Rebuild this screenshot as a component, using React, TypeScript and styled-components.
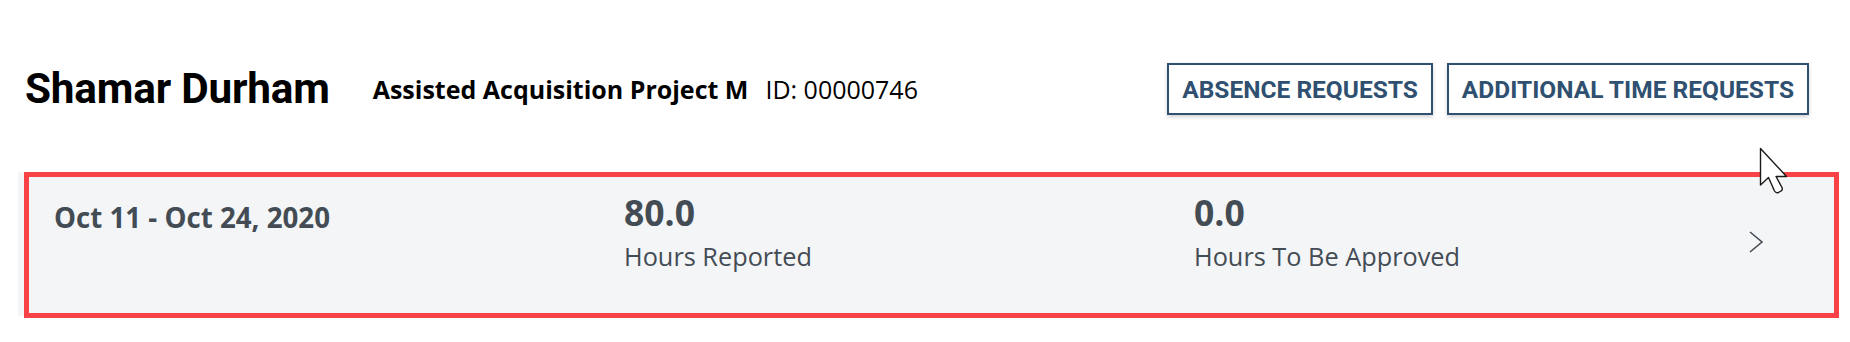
import * as React from "react";
import styled, { createGlobalStyle } from "styled-components";

const ink = "#434c54";
const navy = "#2f5070";

const GlobalStyle = createGlobalStyle`
  html, body {
    margin: 0;
    padding: 0;
    background: #ffffff;
  }
  body {
    font-family: "Open Sans", "Liberation Sans", sans-serif;
  }
`;

const Page = styled.div`
  position: relative;
  width: 1850px;
  height: 342px;
  overflow: hidden;
  background: #ffffff;
`;

const Header = styled.header`
  display: flex;
  align-items: center;
  height: 52px;
  padding: 63px 41px 0 25px;
`;

const Name = styled.h1`
  margin: 0;
  font-family: Roboto, "Liberation Sans", sans-serif;
  font-weight: 700;
  font-size: 42.3px;
  line-height: 52px;
  color: #000000;
  letter-spacing: -0.2px;
`;

const Project = styled.span`
  margin-left: 43px;
  font-family: "Open Sans", "Liberation Sans", sans-serif;
  font-weight: 700;
  font-size: 25px;
  color: #000000;
`;

const EmployeeId = styled.span`
  margin-left: 17px;
  font-family: "Open Sans", "Liberation Sans", sans-serif;
  font-weight: 400;
  font-size: 25px;
  color: #000000;
`;

const Actions = styled.div`
  display: flex;
  gap: 14px;
  margin-left: auto;
`;

const OutlineButton = styled.button`
  height: 52px;
  padding: 0 13px;
  border: 2px solid ${navy};
  background: #ffffff;
  color: ${navy};
  font-family: Roboto, "Liberation Sans", sans-serif;
  font-weight: 700;
  font-size: 24.5px;
  text-transform: uppercase;
  box-shadow: 0 2px 4px rgba(0, 0, 0, 0.18);
  cursor: pointer;
`;

const Card = styled.section`
  position: relative;
  display: grid;
  grid-template-columns: 570px 570px 1fr auto;
  align-items: start;
  margin: 57px 16px 0 18px;
  padding: 18px 70px 43px 36px;
  background: #f4f5f7;
  color: ${ink};
`;

const Highlight = styled.div`
  position: absolute;
  top: 0;
  left: 6px;
  right: -5px;
  bottom: -2px;
  border: 5px solid #f94246;
  pointer-events: none;
`;

const Period = styled.div`
  margin-top: 8px;
  font-weight: 700;
  font-size: 27.7px;
`;

const Metric = styled.div`
  display: flex;
  flex-direction: column;
  margin-top: -2px;
`;

const MetricValue = styled.span`
  font-weight: 700;
  font-size: 35.5px;
`;

const MetricLabel = styled.span`
  margin-top: 3px;
  font-weight: 400;
  font-size: 25.3px;
`;

const Chevron = styled.svg`
  width: 16px;
  height: 24px;
  margin-top: 40px;
`;

const Cursor = styled.svg`
  position: absolute;
  left: 1759px;
  top: 147px;
  width: 30px;
  height: 48px;
`;

const metrics = [
  { value: "80.0", label: "Hours Reported" },
  { value: "0.0", label: "Hours To Be Approved" },
];

export default function App() {
  return (
    <Page>
      <GlobalStyle />
      <Header>
        <Name>Shamar Durham</Name>
        <Project>Assisted Acquisition Project M</Project>
        <EmployeeId>ID: 00000746</EmployeeId>
        <Actions>
          <OutlineButton>Absence Requests</OutlineButton>
          <OutlineButton>Additional Time Requests</OutlineButton>
        </Actions>
      </Header>
      <Card>
        <Period>Oct 11 - Oct 24, 2020</Period>
        {metrics.map((m) => (
          <Metric key={m.label}>
            <MetricValue>{m.value}</MetricValue>
            <MetricLabel>{m.label}</MetricLabel>
          </Metric>
        ))}
        <Chevron viewBox="0 0 16 24">
          <polyline
            points="2,2 14,12 2,22"
            fill="none"
            stroke={ink}
            strokeWidth="1.6"
          />
        </Chevron>
        <Highlight />
      </Card>
      <Cursor viewBox="0 0 30 48">
        <path
          d="M1.5 1.5 V38 L9.5 30.5 L15.5 44 Q17 46.5 19.5 45.5 L22 44 Q24 43 23 40.5 L17 29.5 H27.5 Z"
          fill="#ffffff"
          stroke="#1a1a1a"
          strokeWidth="1.4"
          strokeLinejoin="round"
        />
      </Cursor>
    </Page>
  );
}
